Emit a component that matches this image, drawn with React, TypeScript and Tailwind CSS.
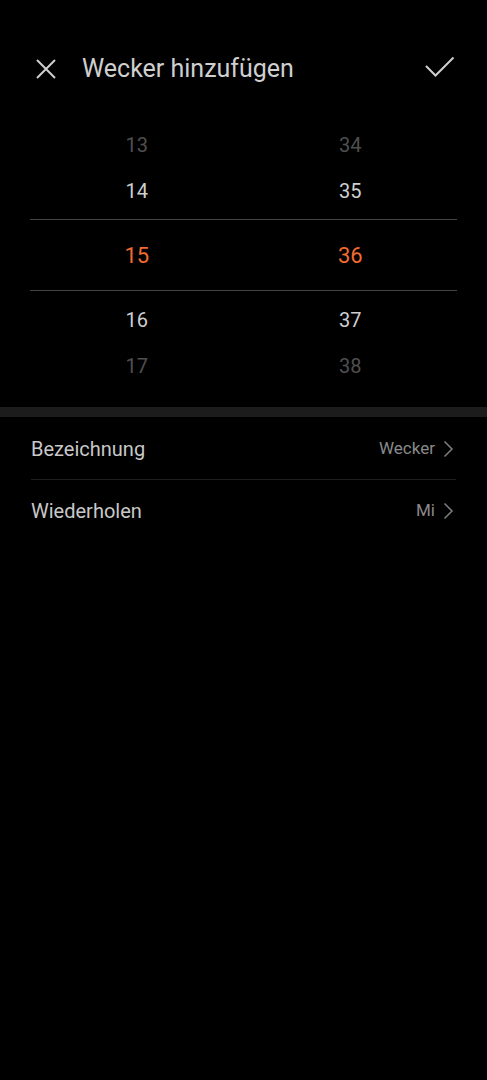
import type { ReactNode } from 'react';

// ─── Wheel picker ─────────────────────────────────────────────────────────────

const hours = ['13', '14', '15', '16', '17'];
const minutes = ['34', '35', '36', '37', '38'];

function WheelColumn({ values }: { values: string[] }) {
  return (
    <div className="flex flex-col items-center">
      <div className="h-[46px] flex items-center text-[20px] text-[#4f4f4f]">{values[0]}</div>
      <div className="h-[46px] flex items-center text-[20px] text-[#cfcfcf]">{values[1]}</div>
      <div className="h-[82px] flex items-center text-[22px] text-[#f26b30]">{values[2]}</div>
      <div className="h-[48px] flex items-center text-[20px] text-[#cfcfcf]">{values[3]}</div>
      <div className="h-[44px] flex items-center text-[20px] text-[#4f4f4f]">{values[4]}</div>
    </div>
  );
}

// ─── Settings row ─────────────────────────────────────────────────────────────

function Row({ label, value, children }: { label: string; value: string; children?: ReactNode }) {
  return (
    <div className="h-[61px] flex items-center justify-between">
      <span className="text-[20px] text-[#c8c8c8]">{label}</span>
      <span className="flex items-center gap-[8px] pr-[2px] text-[17px] text-[#8a8a8a]">
        {value}
        <svg width="11" height="18" viewBox="0 0 11 18" fill="none">
          <path d="M1.5 1.5 L9 9 L1.5 16.5" stroke="#7a7a7a" strokeWidth="1.6" />
        </svg>
      </span>
      {children}
    </div>
  );
}

export default function App() {
  return (
    <div className="w-[487px] h-[1080px] bg-black font-['Roboto',sans-serif] overflow-hidden">
      {/* header */}
      <div className="h-[100px] pt-[36px] pl-[36px] pr-[32px] flex items-start justify-between">
        <div className="flex items-center h-[66px]">
          <svg width="20" height="20" viewBox="0 0 20 20">
            <path d="M1 1 L19 19 M19 1 L1 19" stroke="#cfcfcf" strokeWidth="2" />
          </svg>
          <span className="ml-[26px] text-[25px] text-[#cfcfcf]">Wecker hinzufügen</span>
        </div>
        <svg width="30" height="22" viewBox="0 0 30 22" className="mt-[20px]">
          <path d="M1 10 L10.5 19.5 L28.5 1.5" stroke="#cfcfcf" strokeWidth="2" fill="none" />
        </svg>
      </div>

      {/* time wheel */}
      <div className="relative mx-[30px] pt-[22px]">
        <div className="grid grid-cols-2">
          <div className="flex justify-center">
            <WheelColumn values={hours} />
          </div>
          <div className="flex justify-center">
            <WheelColumn values={minutes} />
          </div>
        </div>
        <div className="absolute left-0 right-0 top-[119px] h-px bg-[#444]" />
        <div className="absolute left-0 right-0 top-[190px] h-px bg-[#444]" />
      </div>

      <div className="mt-[19px] h-[10px] bg-[#1c1c1c]" />

      {/* options */}
      <div className="px-[31px] pt-[1px]">
        <div className="border-b border-[#1f1f1f]">
          <Row label="Bezeichnung" value="Wecker" />
        </div>
        <Row label="Wiederholen" value="Mi" />
      </div>
    </div>
  );
}
